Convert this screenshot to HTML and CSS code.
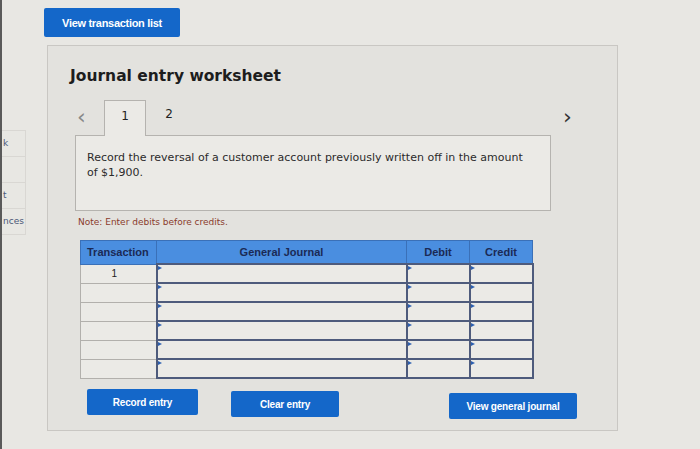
FILE: index.html
```html
<!DOCTYPE html>
<html lang="en">
  <head>
    <meta charset="UTF-8" />
    <title>Journal entry worksheet</title>
    <link rel="stylesheet" href="styles.css">
  </head>
  <body>
    <!-- left nav, cut off by the window -->
    <div class="side">
      <div class="side-item">k</div>
      <div class="side-item"></div>
      <div class="side-item">t</div>
      <div class="side-item">nces</div>
    </div>

    <div class="main">
      <button class="btn btn-top">View transaction list</button>

      <div class="panel">
        <h2 class="title">Journal entry worksheet</h2>

        <div class="tabs">
          <span class="arrow">&lsaquo;</span>
          <span class="tab active">1</span>
          <span class="tab">2</span>
          <span class="arrow arrow-right">&rsaquo;</span>
        </div>

        <div class="question">
          Record the reversal of a customer account previously written off in the amount
          of $1,900.
        </div>

        <p class="note">Note: Enter debits before credits.</p>

        <table class="journal">
          <thead>
            <tr>
              <th class="c-tr">Transaction</th>
              <th class="c-gj">General Journal</th>
              <th class="c-dr">Debit</th>
              <th class="c-cr">Credit</th>
            </tr>
          </thead>
          <tbody>
            <tr><td class="c-tr">1</td><td class="inp"></td><td class="inp"></td><td class="inp"></td></tr>
            <tr><td class="c-tr"></td><td class="inp"></td><td class="inp"></td><td class="inp"></td></tr>
            <tr><td class="c-tr"></td><td class="inp"></td><td class="inp"></td><td class="inp"></td></tr>
            <tr><td class="c-tr"></td><td class="inp"></td><td class="inp"></td><td class="inp"></td></tr>
            <tr><td class="c-tr"></td><td class="inp"></td><td class="inp"></td><td class="inp"></td></tr>
            <tr><td class="c-tr"></td><td class="inp"></td><td class="inp"></td><td class="inp"></td></tr>
          </tbody>
        </table>

        <div class="actions">
          <button class="btn btn-record">Record entry</button>
          <button class="btn btn-clear">Clear entry</button>
          <button class="btn btn-view">View general journal</button>
        </div>
      </div>
    </div>
  </body>
</html>
```

FILE: styles.css
```css
body {
  margin: 0;
  background: #e8e7e3;
  font-family: "DejaVu Sans", Verdana, sans-serif;
  color: #222;
  display: flex;
  height: 449px;
  overflow: hidden;
}
.side {
  width: 24px;
  border-left: 2px solid #5a5a5a;
  padding-top: 130px;
}
.side-item {
  height: 25px;
  border: 1px solid #d9d7d3;
  border-left: none;
  margin-bottom: -1px;
  font-size: 9px;
  line-height: 25px;
  color: #4b5877;
  padding-left: 1px;
  white-space: nowrap;
}
.main {
  margin-left: 18px;
  padding-top: 8px;
}
.btn {
  background: #1467c9;
  color: #fff;
  border: none;
  border-radius: 2px;
  font-family: "Liberation Sans", Arial, sans-serif;
  font-weight: bold;
  font-size: 10px;
  letter-spacing: -0.2px;
  height: 26px;
  padding: 0;
  cursor: pointer;
}
.btn-top {
  width: 136px;
  height: 29px;
  font-size: 11px;
  letter-spacing: -0.3px;
}
.panel {
  margin: 8px 0 0 3px;
  width: 571px;
  height: 386px;
  border: 1px solid #c9c7c3;
  background: #e3e2de;
  padding: 0 0 0 27px;
  box-sizing: border-box;
}
.title {
  margin: 20px 0 0 -5px;
  font-size: 15.5px;
  font-weight: bold;
  color: #1d1d1d;
  line-height: 20px;
}
.tabs {
  display: flex;
  align-items: center;
  margin-top: 13px;
  height: 36px;
  width: 515px;
}
.arrow {
  font-size: 22px;
  color: #888;
  width: 27px;
  text-align: left;
  padding-left: 2px;
  line-height: 20px;
}
.arrow-right {
  margin-left: auto;
  color: #333;
}
.tab {
  width: 42px;
  height: 36px;
  box-sizing: border-box;
  text-align: center;
  line-height: 30px;
  font-size: 12px;
  color: #222;
}
.tab.active {
  background: #ebeae6;
  border: 1px solid #b5b3af;
  border-bottom: none;
  position: relative;
  top: 1px;
}
.tab + .tab {
  margin-left: 2px;
}
.question {
  width: 476px;
  height: 76px;
  box-sizing: border-box;
  background: #ebeae6;
  border: 1px solid #b5b3af;
  padding: 14px 24px 0 11px;
  font-size: 11px;
  line-height: 15px;
  color: #2b2b2b;
}
.note {
  margin: 6px 0 0 3px;
  font-size: 9px;
  color: #8a3b2c;
}
.journal {
  margin: 13px 0 0 5px;
  width: 453px;
  border-collapse: collapse;
  table-layout: fixed;
  font-family: "Liberation Sans", Arial, sans-serif;
}
.journal th {
  background: #4a8ee0;
  color: #1b2a55;
  font-size: 11px;
  font-weight: bold;
  height: 22px;
  padding: 0;
  border: 1px solid #3a70b8;
}
.journal th.c-tr {
  text-align: left;
  padding-left: 6px;
}
.c-tr { width: 69px; }
.c-gj { width: 249px; }
.c-dr { width: 62px; }
.c-cr { width: 62px; }
.journal td {
  height: 17px;
  padding: 0;
  background: #ebeae6;
  font-size: 10px;
  text-align: center;
}
.journal td.c-tr {
  border: 1px solid #b2b0ac;
  border-right: 2px solid #4e5b7c;
  padding-right: 8px;
}
.journal td.inp {
  border: 2px solid #4e5b7c;
  position: relative;
}
.journal td.inp::before {
  content: "";
  position: absolute;
  left: 0;
  top: 1px;
  border-left: 4px solid #2c5fb0;
  border-top: 2px solid transparent;
  border-bottom: 2px solid transparent;
}
.actions {
  display: flex;
  margin-top: 10px;
  padding-left: 12px;
}
.btn-record {
  width: 111px;
}
.btn-clear {
  width: 108px;
  margin-left: 33px;
  margin-top: 2px;
}
.btn-view {
  width: 128px;
  margin-left: 110px;
  margin-top: 4px;
}
```
